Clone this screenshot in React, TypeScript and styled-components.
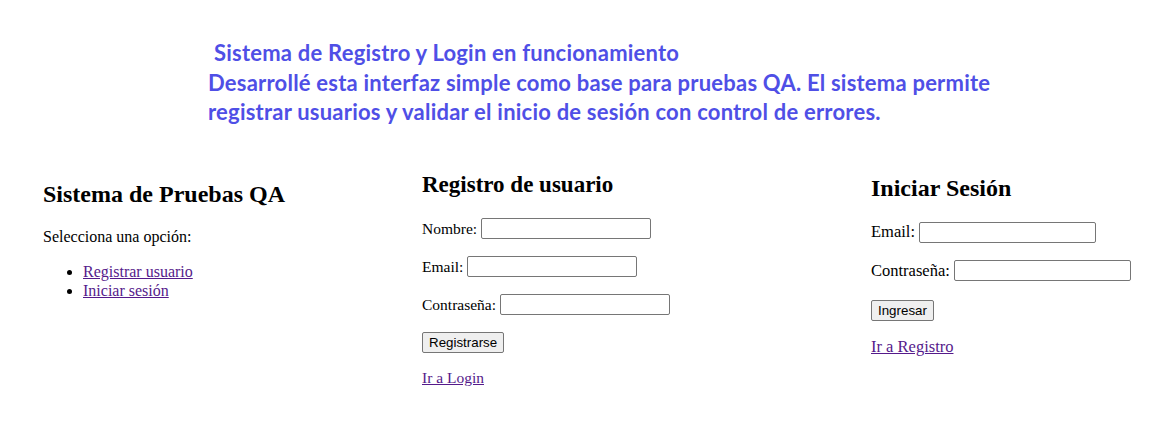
import * as React from 'react';
import styled, { createGlobalStyle } from 'styled-components';

const GlobalStyle = createGlobalStyle`
    body {
        margin: 0;
        background: #ffffff;
        font-family: "Liberation Serif", "Times New Roman", serif;
        color: #000000;
    }
`

const Page = styled.div`
    width: 1166px;
    height: 441px;
    overflow: hidden;
`

const Intro = styled.div`
    padding: 38px 0 0 208px;
    font-family: Lato, "Noto Sans", sans-serif;
    font-weight: 700;
    font-size: 22px;
    letter-spacing: 0.22px;
    line-height: 29.5px;
    color: #4f4fe6;
`

const IntroTitle = styled.div`
    padding-left: 6px;
`

const Columns = styled.div`
    display: flex;
    align-items: flex-start;
    padding-left: 43px;
    margin-top: 24px;
`

const Column = styled.div<{ $width?: number; $top: number; $fs: number }>`
    width: ${p => (p.$width ? `${p.$width}px` : 'auto')};
    flex: none;
    padding-top: ${p => p.$top}px;
    font-size: ${p => p.$fs}px;
`

const Heading = styled.h2<{ $size: number; $gap: number }>`
    margin: 0 0 ${p => p.$gap}px;
    font-size: ${p => p.$size}px;
    font-weight: 700;
    line-height: 27.6px;
`

const Text = styled.p`
    margin: 0 0 16px;
    line-height: 18.4px;
`

const Options = styled.ul`
    margin: 0;
    padding-left: 40px;
    line-height: 19px;
`

const Link = styled.a`
    color: #551a8b;
    text-decoration: underline;
    cursor: pointer;
`

const Field = styled.div<{ $step: number }>`
    display: flex;
    align-items: center;
    gap: 4px;
    height: 22px;
    margin-bottom: ${p => p.$step - 22}px;
`

const Input = styled.input<{ $width: number }>`
    box-sizing: border-box;
    width: ${p => p.$width}px;
    height: 21px;
    padding: 1px 2px;
    border: 1px solid #767676;
    border-radius: 2px;
    background: #ffffff;
    font: 13.33px "Liberation Sans", Arial, sans-serif;
`

const Button = styled.button`
    box-sizing: border-box;
    height: 21px;
    padding: 1px 6px;
    border: 1px solid #767676;
    border-radius: 2px;
    background: #efefef;
    color: #000000;
    font: 13.33px "Liberation Sans", Arial, sans-serif;
`

export default function App() {
    return <Page>
        <GlobalStyle />
        <Intro>
            <IntroTitle>Sistema de Registro y Login en funcionamiento</IntroTitle>
            <div>Desarrollé esta interfaz simple como base para pruebas QA. El sistema permite</div>
            <div>registrar usuarios y validar el inicio de sesión con control de errores.</div>
        </Intro>
        <Columns>
            <Column $width={379} $top={30} $fs={16}>
                <Heading $size={24} $gap={19.9}>Sistema de Pruebas QA</Heading>
                <Text>Selecciona una opción:</Text>
                <Options>
                    <li><Link>Registrar usuario</Link></li>
                    <li><Link>Iniciar sesión</Link></li>
                </Options>
            </Column>
            <Column $width={449} $top={20} $fs={15.5}>
                <Heading $size={23} $gap={19.9}>Registro de usuario</Heading>
                <Field $step={38}>Nombre: <Input $width={170} type="text" /></Field>
                <Field $step={38}>Email: <Input $width={170} type="email" /></Field>
                <Field $step={38}>Contraseña: <Input $width={170} type="password" /></Field>
                <Field $step={37.5}><Button>Registrarse</Button></Field>
                <Text><Link>Ir a Login</Link></Text>
            </Column>
            <Column $top={24} $fs={16.5}>
                <Heading $size={24} $gap={19.4}>Iniciar Sesión</Heading>
                <Field $step={38.5}>Email: <Input $width={177} type="email" /></Field>
                <Field $step={39.5}>Contraseña: <Input $width={177} type="password" /></Field>
                <Field $step={38.5}><Button>Ingresar</Button></Field>
                <Text><Link>Ir a Registro</Link></Text>
            </Column>
        </Columns>
    </Page>
}
